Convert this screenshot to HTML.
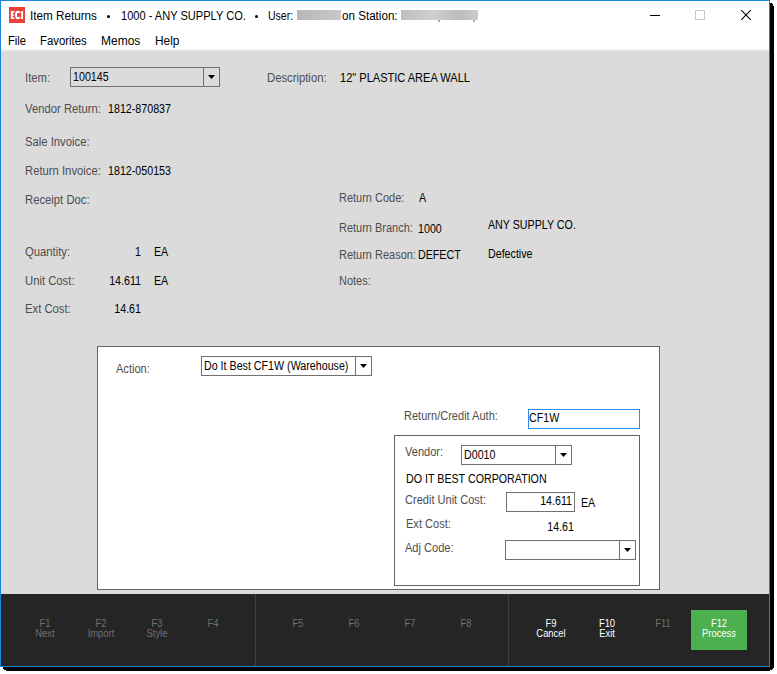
<!DOCTYPE html>
<html><head><meta charset="utf-8">
<style>
*{margin:0;padding:0;box-sizing:border-box}
html,body{width:777px;height:674px;background:#fff;overflow:hidden;position:relative;font-family:"Liberation Sans",sans-serif}
.abs{position:absolute}
.t{position:absolute;font-size:12px;line-height:13px;white-space:nowrap;color:#000;transform:scaleX(0.89);transform-origin:0 0}
.t.r{transform-origin:100% 0}
.lb{color:#4d4d4d;transform:scaleX(0.94)}
#win{position:absolute;left:0;top:0;width:770px;height:667px;border:1px solid #1a86d9;background:#fff}
#shr{position:absolute;left:770px;top:3px;width:4px;height:668px;background:#000}
#shb{position:absolute;left:3px;top:667px;width:771px;height:4px;background:#000}
#body{position:absolute;left:1px;top:51px;width:768px;height:543px;background:#dbdbdb}
#mline{position:absolute;left:1px;top:49px;width:768px;height:2px;background:#efefef}
#foot{position:absolute;left:1px;top:594px;width:768px;height:72px;background:#252526}
.sep{position:absolute;top:594px;width:1px;height:72px;background:#3f3f3f}
.cb{position:absolute;border:1px solid #707070}
.cb .dv{position:absolute;top:0;bottom:0;right:15px;width:1px;background:#707070}
.arr{position:absolute;right:4px;top:7px;width:7px;height:4px}
.fk{position:absolute;width:56px;text-align:center;font-size:10px;line-height:10px;transform:scaleX(0.94);color:#707070}
.fk.on{color:#fff}
.tt{position:absolute;font-size:12.5px;line-height:14px;white-space:nowrap;color:#000;transform:scaleX(0.9);transform-origin:0 0}
</style></head><body>
<div id="shr"></div><div id="shb"></div>
<div class="abs" style="left:772px;top:3px;width:2px;height:1px;background:#fff"></div>
<div class="abs" style="left:773px;top:4px;width:1px;height:2px;background:#fff"></div>
<div class="abs" style="left:3px;top:669px;width:1px;height:2px;background:#fff"></div>
<div class="abs" style="left:4px;top:670px;width:2px;height:1px;background:#fff"></div>
<div class="abs" style="left:770px;top:670px;width:4px;height:1px;background:#fff"></div>
<div class="abs" style="left:772px;top:669px;width:2px;height:1px;background:#fff"></div>
<div class="abs" style="left:773px;top:668px;width:1px;height:1px;background:#fff"></div>
<div id="win"></div>
<div id="mline"></div>
<div id="body"></div>
<div id="foot"></div>

<!-- title bar -->
<div class="abs" style="left:9px;top:7px;width:16px;height:16px;background:#e8403a"></div>
<svg class="abs" style="left:9px;top:7px" width="16" height="16" viewBox="0 0 16 16"><g fill="#fff"><rect x="1.9" y="4" width="1.9" height="8"/><rect x="1.9" y="4" width="3.5" height="1.6"/><rect x="1.9" y="7.2" width="3.2" height="1.5"/><rect x="1.9" y="10.4" width="3.5" height="1.6"/><rect x="12.1" y="4" width="2" height="8"/></g><path d="M10.6 6 Q10.4 4.8 8.8 4.8 Q7 4.8 7 8 Q7 11.2 8.8 11.2 Q10.4 11.2 10.6 10" fill="none" stroke="#fff" stroke-width="1.9"/></svg>
<div class="tt" style="left:30px;top:9px;transform:scaleX(0.935)">Item Returns</div>
<div class="abs" style="left:106.5px;top:14.5px;width:3.6px;height:3.6px;border-radius:50%;background:#000"></div>
<div class="tt" style="left:120.5px;top:9px;transform:scaleX(0.885)">1000 - ANY SUPPLY CO.</div>
<div class="abs" style="left:254.5px;top:14.5px;width:3.6px;height:3.6px;border-radius:50%;background:#000"></div>
<div class="tt" style="left:268px;top:9px;transform:scaleX(0.84)">User:</div>
<div class="abs" style="left:297px;top:10px;width:44px;height:10px;background:linear-gradient(90deg,#b8b6b8,#c2c1c3 60%,#c9c9cb)"></div>
<div class="tt" style="left:342px;top:9px;transform:scaleX(0.93)">on Station:</div>
<div class="abs" style="left:401px;top:10px;width:77px;height:10px;background:linear-gradient(90deg,#bebebe,#cfcfcf 42%,#bdbcbd 75%,#cacaca)"></div>
<div class="abs" style="left:438px;top:20px;width:2px;height:1.5px;background:#8a8a8a;border-radius:1px"></div>
<div class="abs" style="left:473px;top:20px;width:2px;height:1.5px;background:#8a8a8a;border-radius:1px"></div>
<div class="abs" style="left:650px;top:15px;width:10px;height:1px;background:#000"></div>
<div class="abs" style="left:695px;top:10px;width:10px;height:10px;border:1px solid #c8c8c8"></div>
<svg class="abs" style="left:740px;top:9px" width="12" height="12"><path d="M1.2 1.2L10.8 10.8M10.8 1.2L1.2 10.8" stroke="#000" stroke-width="1.05"/></svg>

<!-- menu -->
<div class="tt" style="left:8px;top:34px">File</div>
<div class="tt" style="left:40px;top:34px;transform:scaleX(0.91)">Favorites</div>
<div class="tt" style="left:101px;top:34px;transform:scaleX(0.96)">Memos</div>
<div class="tt" style="left:155px;top:34px;transform:scaleX(0.95)">Help</div>

<!-- body left -->
<div class="t lb" style="left:25px;top:72px">Item:</div>
<div class="cb" style="left:70px;top:67px;width:150px;height:20px"><div class="dv"></div><svg class="arr" viewBox="0 0 7 4"><path d="M0 0H7L3.5 4Z" fill="#000"/></svg></div>
<div class="t" style="left:73px;top:71px">100145</div>
<div class="t lb" style="left:267px;top:72px">Description:</div>
<div class="t" style="left:340px;top:72px;transform:scaleX(0.92)">12" PLASTIC AREA WALL</div>

<div class="t lb" style="left:25px;top:103px">Vendor Return:</div>
<div class="t" style="left:108px;top:103px">1812-870837</div>
<div class="t lb" style="left:25px;top:136px">Sale Invoice:</div>
<div class="t lb" style="left:25px;top:165px">Return Invoice:</div>
<div class="t" style="left:108px;top:165px">1812-050153</div>
<div class="t lb" style="left:25px;top:194px">Receipt Doc:</div>
<div class="t lb" style="left:25px;top:246px">Quantity:</div>
<div class="t r" style="left:101px;top:246px;width:40px;text-align:right">1</div>
<div class="t" style="left:154px;top:246px">EA</div>
<div class="t lb" style="left:25px;top:275px">Unit Cost:</div>
<div class="t r" style="left:101px;top:275px;width:40px;text-align:right">14.611</div>
<div class="t" style="left:154px;top:275px">EA</div>
<div class="t lb" style="left:25px;top:303px">Ext Cost:</div>
<div class="t r" style="left:101px;top:303px;width:40px;text-align:right">14.61</div>

<!-- body right -->
<div class="t lb" style="left:339px;top:192px;transform:scaleX(0.915)">Return Code:</div>
<div class="t" style="left:419px;top:192px">A</div>
<div class="t lb" style="left:339px;top:222px;transform:scaleX(0.915)">Return Branch:</div>
<div class="t" style="left:418px;top:223px">1000</div>
<div class="t" style="left:488px;top:219px">ANY SUPPLY CO.</div>
<div class="t lb" style="left:339px;top:249px;transform:scaleX(0.915)">Return Reason:</div>
<div class="t" style="left:418px;top:249px">DEFECT</div>
<div class="t" style="left:488px;top:248px">Defective</div>
<div class="t lb" style="left:339px;top:275px;transform:scaleX(0.915)">Notes:</div>

<!-- panel -->
<div class="abs" style="left:97px;top:346px;width:563px;height:244px;background:#fff;border:1px solid #646464"></div>
<div class="t lb" style="left:116px;top:363px;transform:scaleX(0.92)">Action:</div>
<div class="cb" style="left:201px;top:356px;width:171px;height:20px"><div class="dv"></div><svg class="arr" viewBox="0 0 7 4"><path d="M0 0H7L3.5 4Z" fill="#000"/></svg></div>
<div class="t" style="left:204px;top:360px">Do It Best CF1W (Warehouse)</div>

<div class="t lb" style="left:404px;top:410px;transform:scaleX(0.92)">Return/Credit Auth:</div>
<div class="abs" style="left:528px;top:409px;width:112px;height:20px;border:1px solid #2a8cf0"></div>
<div class="t" style="left:529px;top:412px">CF1W</div>

<div class="abs" style="left:394px;top:435px;width:246px;height:151px;border:1px solid #646464"></div>
<div class="t lb" style="left:405px;top:446px;transform:scaleX(0.92)">Vendor:</div>
<div class="cb" style="left:461px;top:445px;width:111px;height:20px"><div class="dv"></div><svg class="arr" viewBox="0 0 7 4"><path d="M0 0H7L3.5 4Z" fill="#000"/></svg></div>
<div class="t" style="left:464px;top:449px">D0010</div>
<div class="t" style="left:406px;top:473px">DO IT BEST CORPORATION</div>
<div class="t lb" style="left:405px;top:494px;transform:scaleX(0.92)">Credit Unit Cost:</div>
<div class="abs" style="left:506px;top:492px;width:69px;height:20px;border:1px solid #707070"></div>
<div class="t r" style="left:520px;top:495px;width:52px;text-align:right">14.611</div>
<div class="t" style="left:581px;top:497px">EA</div>
<div class="t lb" style="left:406px;top:518px;transform:scaleX(0.92)">Ext Cost:</div>
<div class="t r" style="left:520px;top:521px;width:54px;text-align:right">14.61</div>
<div class="t lb" style="left:405px;top:542px;transform:scaleX(0.92)">Adj Code:</div>
<div class="cb" style="left:505px;top:540px;width:131px;height:20px"><div class="dv"></div><svg class="arr" viewBox="0 0 7 4"><path d="M0 0H7L3.5 4Z" fill="#000"/></svg></div>

<!-- footer -->
<div class="sep" style="left:255px"></div>
<div class="sep" style="left:508px"></div>
<div class="abs" style="left:691px;top:610px;width:56px;height:40px;background:#4caf50"></div>
<div class="fk" style="left:17px;top:619.3px">F1<br>Next</div>
<div class="fk" style="left:73px;top:619.3px">F2<br>Import</div>
<div class="fk" style="left:129px;top:619.3px">F3<br>Style</div>
<div class="fk" style="left:185px;top:619.3px">F4</div>
<div class="fk" style="left:270px;top:619.3px">F5</div>
<div class="fk" style="left:326px;top:619.3px">F6</div>
<div class="fk" style="left:382px;top:619.3px">F7</div>
<div class="fk" style="left:438px;top:619.3px">F8</div>
<div class="fk on" style="left:523px;top:619.3px">F9<br>Cancel</div>
<div class="fk on" style="left:579px;top:619.3px">F10<br>Exit</div>
<div class="fk" style="left:635px;top:619.3px">F11</div>
<div class="fk on" style="left:691px;top:619.3px">F12<br>Process</div>
</body></html>
